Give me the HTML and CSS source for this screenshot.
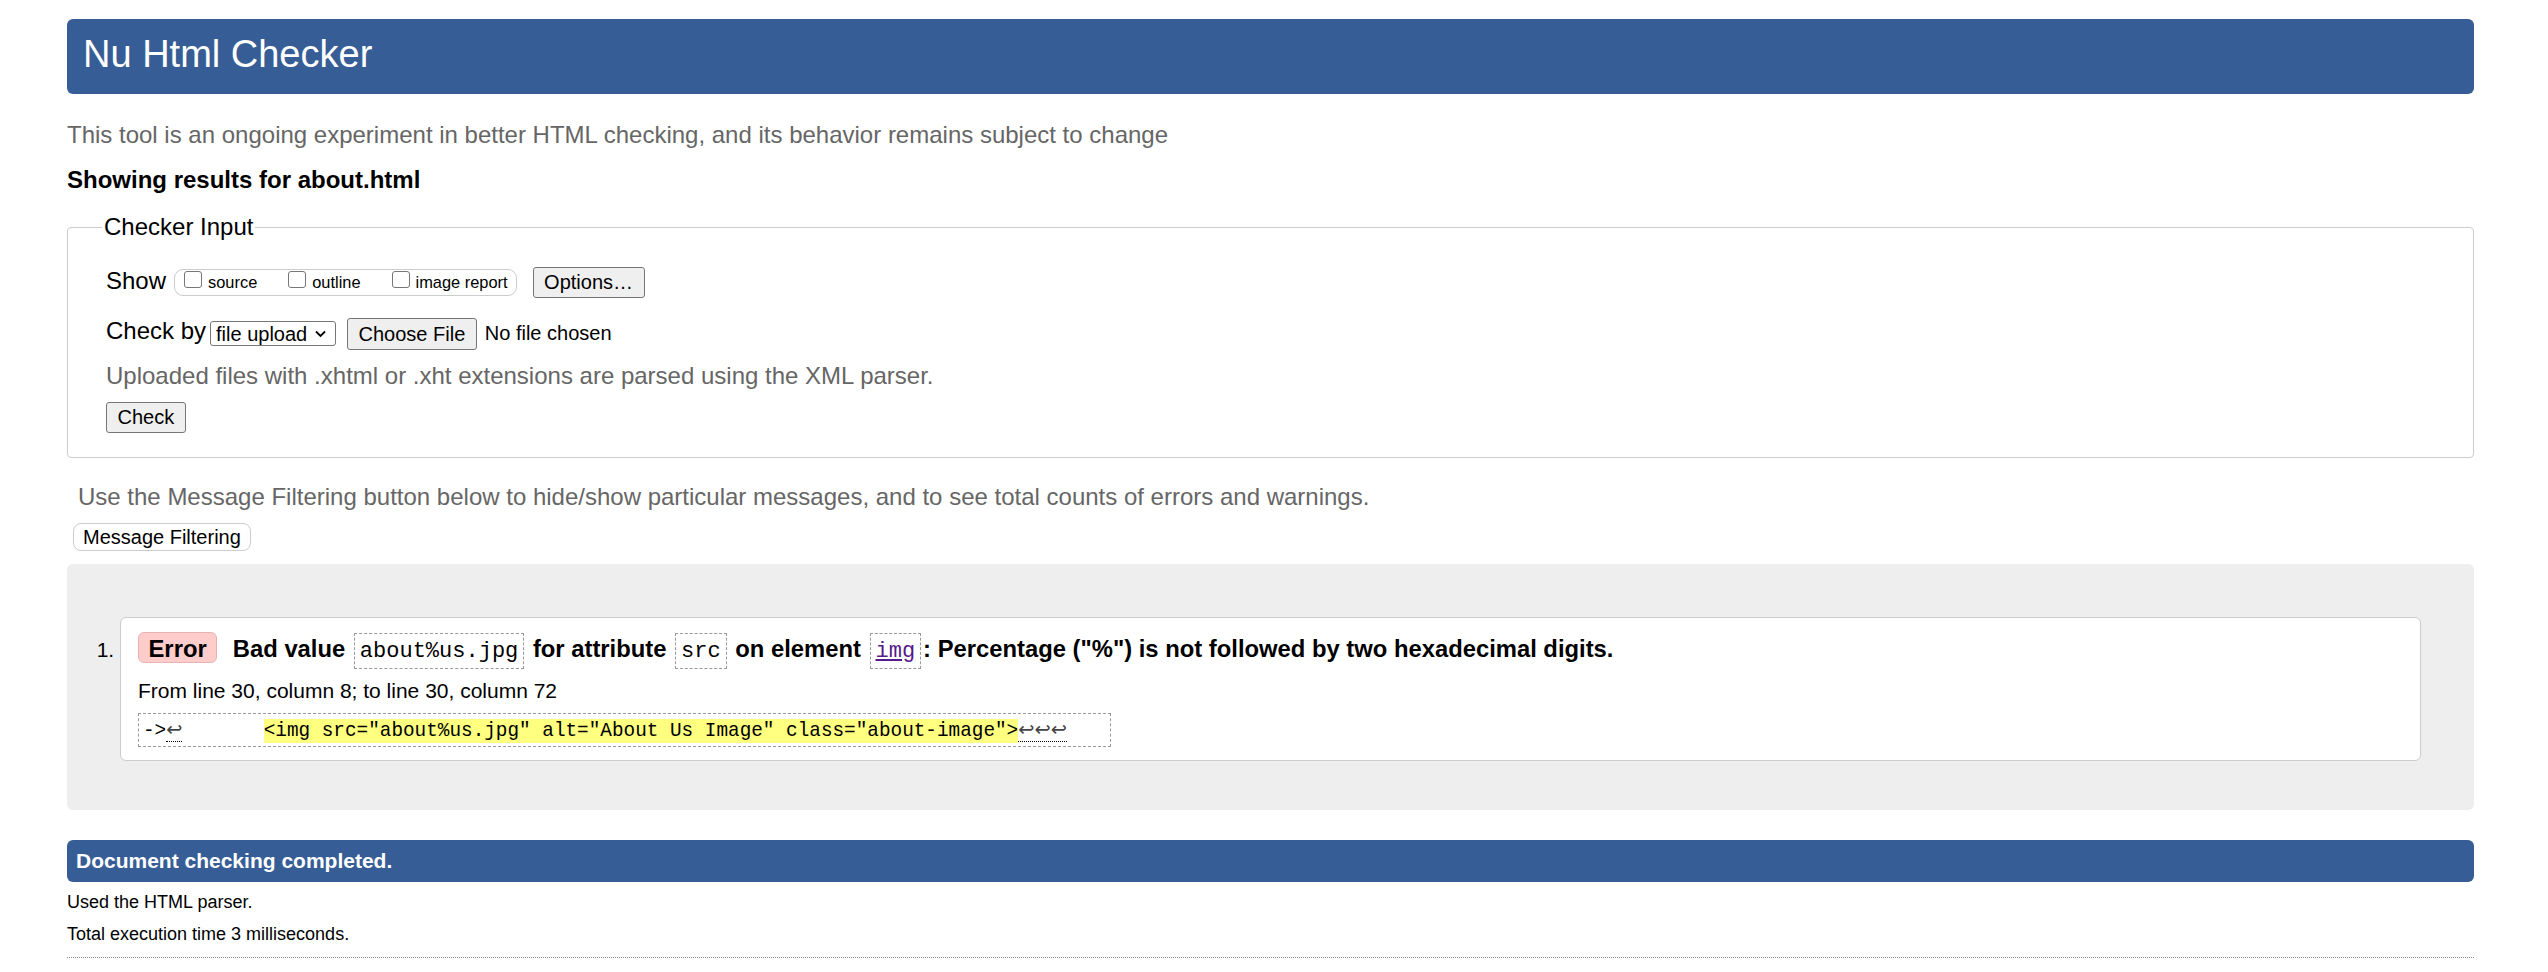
FILE: index.html
```html
<!DOCTYPE html>
<html lang="en">
<head>
<meta charset="utf-8">
<title>Showing results for about.html - Nu Html Checker</title>
<link rel="stylesheet" href="styles.css">
</head>
<body>
<h1 class="title">Nu Html Checker</h1>
<p class="intro">This tool is an ongoing experiment in better HTML checking, and its behavior remains subject to change</p>
<h2 class="results-for">Showing results for about.html</h2>
<form class="checker-form">
  <fieldset class="checker-input">
    <legend class="legend">Checker Input</legend>
    <div class="row row-show">
      <span class="row-label">Show</span>
      <span class="show-group">
        <label class="opt"><input type="checkbox" class="cb"><span class="opt-text">source</span></label>
        <label class="opt"><input type="checkbox" class="cb"><span class="opt-text">outline</span></label>
        <label class="opt"><input type="checkbox" class="cb"><span class="opt-text">image report</span></label>
      </span>
      <button type="button" class="btn">Options…</button>
    </div>
    <div class="row row-checkby">
      <span class="row-label row-label-by">Check by</span>
      <span class="select-wrap">
        <select class="select"><option>file upload</option></select>
        <svg class="chev" width="11" height="8" viewBox="0 0 11 8" aria-hidden="true"><path d="M1 1.5 L5.5 6 L10 1.5" fill="none" stroke="#000" stroke-width="1.8"/></svg>
      </span>
      <button type="button" class="btn btn-file">Choose File</button>
      <span class="file-status">No file chosen</span>
    </div>
    <p class="note">Uploaded files with .xhtml or .xht extensions are parsed using the XML parser.</p>
    <div class="row-submit"><button type="button" class="btn">Check</button></div>
  </fieldset>
</form>
<p class="filter-note">Use the Message Filtering button below to hide/show particular messages, and to see total counts of errors and warnings.</p>
<button type="button" class="filter-btn">Message Filtering</button>
<div class="results">
  <ol class="messages">
    <li class="message">
      <p class="msg-line"><strong class="badge">Error</strong> Bad value <code class="c">about%us.jpg</code> for attribute <code class="c">src</code> on element <code class="c"><a class="elink" href="#">img</a></code>: Percentage ("%") is not followed by two hexadecimal digits.</p>
      <p class="location">From line 30, column 8; to line 30, column 72</p>
      <p class="extract"><code class="xcode">-&gt;<span class="lf">↩</span>       <b class="hl">&lt;img src="about%us.jpg" alt="About Us Image" class="about-image"&gt;</b><span class="lf">↩↩↩</span></code></p>
    </li>
  </ol>
</div>
<h2 class="completed">Document checking completed.</h2>
<p class="detail">Used the HTML parser.</p>
<p class="detail detail-2">Total execution time 3 milliseconds.</p>
<hr class="rule">
</body>
</html>
```

FILE: styles.css
```css
* { box-sizing: border-box; }

html { background: #fff; }

body {
  margin: 0;
  padding: 19px 74px 0 67px;
  font-family: "Liberation Sans", Arial, Helvetica, sans-serif;
  font-size: 24px;
  line-height: 28px;
  color: #000;
}

.title {
  margin: 0;
  height: 75px;
  padding: 0 16px 4px;
  background: #365d95;
  color: #fff;
  font-size: 38px;
  font-weight: normal;
  line-height: 71px;
  border-radius: 6px;
}

.intro {
  margin: 27px 0 0;
  color: #666;
}

.results-for {
  margin: 17px 0 0;
  font-size: 24px;
  font-weight: bold;
  line-height: 28px;
}

.checker-form { margin: 19px 0 0; }

.checker-input {
  margin: 0;
  min-width: 0;
  padding: 26px 37px 24px 38px;
  border: 1px solid #ccc;
  border-radius: 4px;
}

.legend {
  margin-left: -4px;
  padding: 0 2px;
  font-size: 24px;
  line-height: 28px;
}

.row {
  display: flex;
  align-items: flex-start;
}

.row-label { line-height: 28px; }

.show-group {
  display: inline-flex;
  align-items: flex-start;
  height: 27px;
  margin: 2px 16px 0 8px;
  padding: 0 8px 0 9px;
  border: 1px solid #ccc;
  border-radius: 9px;
  background: #fff;
}

.opt {
  display: flex;
  align-items: flex-start;
}

.opt + .opt { margin-left: 31px; }

.cb {
  -webkit-appearance: none;
  appearance: none;
  width: 18px;
  height: 17px;
  margin: 1px 6px 0 0;
  border: 1px solid #767676;
  border-radius: 3px;
  background: #fff;
}

.opt-text {
  margin-top: 3px;
  font-size: 16.4px;
  line-height: 19px;
}

.btn {
  height: 31px;
  padding: 0 10.5px;
  font-family: "Liberation Sans", Arial, sans-serif;
  font-size: 20px;
  line-height: 23px;
  color: #000;
  background: #efefef;
  border: 1px solid #767676;
  border-radius: 3px;
}

.row-checkby { margin-top: 20px; }

.row-label-by { margin-top: -1px; }

.select-wrap {
  display: inline-flex;
  align-items: center;
  width: 126px;
  height: 25px;
  margin: 3px 11px 0 4px;
  border: 1px solid #767676;
  border-radius: 3px;
  background: #fff;
}

.select {
  -webkit-appearance: none;
  appearance: none;
  flex: 1;
  min-width: 0;
  height: 23px;
  margin: 0;
  padding: 0 0 0 5px;
  border: 0;
  background: transparent;
  font-family: "Liberation Sans", Arial, sans-serif;
  font-size: 20px;
  color: #000;
}

.chev { margin-right: 9px; flex: none; }

.btn-file { height: 32px; }

.file-status {
  margin: 4px 0 0 8px;
  font-size: 20px;
  line-height: 23px;
}

.note {
  margin: 12px 0 0;
  color: #666;
}

.row-submit {
  display: flex;
  margin-top: 12px;
}

.filter-note {
  margin: 25px 0 0 11px;
  color: #666;
}

.filter-btn {
  display: block;
  height: 28px;
  margin: 12px 0 0 6px;
  padding: 0 9px;
  font-family: "Liberation Sans", Arial, sans-serif;
  font-size: 20px;
  line-height: 23px;
  color: #000;
  background: #fff;
  border: 1px solid #ccc;
  border-radius: 8px;
}

.results {
  margin-top: 13px;
  padding: 53px 53px 49px;
  background: #eee;
  border-radius: 6px;
}

.messages {
  margin: 0;
  padding: 0;
  list-style: decimal outside;
}

.message {
  padding: 14px 17px 13px;
  background: #fff;
  border: 1px solid #ccc;
  border-radius: 6px;
  font-size: 21px;
  line-height: 24px;
}

.msg-line {
  margin: 0;
  font-size: 23.8px;
  font-weight: bold;
  line-height: 30px;
}

.badge {
  display: inline-block;
  margin-right: 9px;
  padding: 2px 9.5px 0;
  line-height: 27px;
  background: #fcc;
  border: 1px solid #e7b3b3;
  border-radius: 6px;
}

.c {
  display: inline-block;
  margin: 0 2px;
  padding: 1px 5px 0;
  font-family: "Liberation Mono", "DejaVu Sans Mono", monospace;
  font-size: 22px;
  font-weight: normal;
  line-height: 33px;
  border: 1px dashed #999;
}

.elink { color: #551a8b; }

.location { margin: 10px 0 0; }

.extract {
  width: fit-content;
  margin: 10px 0 0;
  padding: 3px 43px 3px 4px;
  border: 1px dashed #999;
  line-height: 24px;
  white-space: pre;
}

.xcode {
  font-family: "Liberation Mono", "DejaVu Sans Mono", monospace;
  font-size: 19.35px;
}

.hl {
  padding: 1px 0;
  font-weight: normal;
  background: #ffff80;
}

.lf {
  font-family: "DejaVu Sans", sans-serif;
  color: #444;
  border-bottom: 1px dotted #000;
}

.completed {
  height: 42px;
  margin: 30px 0 0;
  padding: 0 9px;
  background: #365d95;
  color: #fff;
  font-size: 21px;
  font-weight: bold;
  line-height: 42px;
  border-radius: 6px;
}

.detail {
  margin: 10px 0 0;
  font-size: 18px;
  line-height: 21px;
}

.detail-2 { margin-top: 11px; }

.rule {
  height: 0;
  margin: 11.6px 0 0;
  border: 0;
  border-top: 1px dotted #888;
}
```
